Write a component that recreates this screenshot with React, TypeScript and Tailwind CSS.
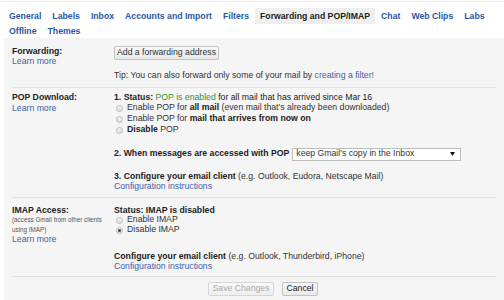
import type React from 'react';

const tabsRow1 = ['General', 'Labels', 'Inbox', 'Accounts and Import', 'Filters', 'Forwarding and POP/IMAP', 'Chat', 'Web Clips', 'Labs'];
const tabsRow2 = ['Offline', 'Themes'];
const ACTIVE = 'Forwarding and POP/IMAP';

const Tab: React.FC<{ label: string }> = ({ label }) => (
  <span
    className={`px-[5px] ${label === ACTIVE ? 'bg-[#efefef] text-[#222]' : 'text-[#2b56a6]'}`}
  >
    {label}
  </span>
);

const Radio: React.FC<{ checked?: boolean }> = ({ checked }) => (
  <span className="ml-[1.5px] mr-[4.5px] inline-flex h-[7px] w-[7px] shrink-0 items-center justify-center rounded-full border border-[#bbbbbb] bg-linear-to-b from-[#f4f4f4] to-[#dedede]">
    {checked && <span className="h-[3px] w-[3px] rounded-full bg-[#444]" />}
  </span>
);

const Link: React.FC<{ children: React.ReactNode }> = ({ children }) => (
  <span className="text-[#3b62ad]">{children}</span>
);

export default function App() {
  return (
    <div className="h-[300px] w-[504px] overflow-hidden bg-white font-['Liberation_Sans',Arial,sans-serif] text-[8.7px] text-[#222]">
      <div className="mt-px h-px bg-[#ececec]" />

      {/* tabs */}
      <div className="pl-[4px] pt-[6px] font-bold">
        <div className="flex h-[16px] items-center gap-x-px leading-[16px]">
          {tabsRow1.map((t) => (
            <Tab key={t} label={t} />
          ))}
        </div>
        <div className="flex h-[14px] items-center gap-x-px leading-[14px]">
          {tabsRow2.map((t) => (
            <Tab key={t} label={t} />
          ))}
        </div>
      </div>

      {/* settings panel */}
      <div className="ml-[4px] h-[262px] bg-[#f5f5f5] pl-[8px] pr-[8px]">
        {/* Forwarding */}
        <div className="flex border-b border-[#e2e2e2] pb-[7px] pt-[8px]">
          <div className="w-[102px] shrink-0 leading-[10px]">
            <div className="font-bold">Forwarding:</div>
            <Link>Learn more</Link>
          </div>
          <div className="flex-1">
            <div className="flex h-[14px] w-[105px] items-center justify-center rounded-[2px] border border-[#c3c3c3] bg-linear-to-b from-[#f9f9f9] to-[#e8e8e8] text-[#333]">
              Add a forwarding address
            </div>
            <div className="mt-[10px] leading-[10px] text-[#333]">
              Tip: You can also forward only some of your mail by <Link>creating a filter!</Link>
            </div>
          </div>
        </div>

        {/* POP */}
        <div className="flex border-b border-[#e2e2e2] pb-[6px] pt-[3.5px]">
          <div className="w-[102px] shrink-0 leading-[11px]">
            <div className="font-bold">POP Download:</div>
            <Link>Learn more</Link>
          </div>
          <div className="flex-1">
            <div className="leading-[11px]">
              <span className="font-bold">1. Status: </span>
              <span className="text-[#2f962f]">POP is enabled</span> for all mail that has arrived since Mar 16
            </div>
            <div className="flex h-[11px] items-center text-[#333]">
              <Radio />
              <span>
                Enable POP for <b className="text-[#222]">all mail</b> (even mail that's already been downloaded)
              </span>
            </div>
            <div className="flex h-[11px] items-center text-[#333]">
              <Radio />
              <span>
                Enable POP for <b className="text-[#222]">mail that arrives from now on</b>
              </span>
            </div>
            <div className="flex h-[11px] items-center text-[#333]">
              <Radio />
              <span>
                <b className="text-[#222]">Disable</b> POP
              </span>
            </div>

            <div className="mt-[12px] flex h-[13px] items-center">
              <span className="font-bold">2. When messages are accessed with POP</span>
              <div className="ml-[3px] flex h-[13px] w-[169px] items-center justify-between border border-[#bdbdbd] bg-white pl-[3px] pr-[5px] text-[#333]">
                <span>keep Gmail's copy in the Inbox</span>
                <svg width="5" height="4" viewBox="0 0 5 4">
                  <path d="M0 0h5L2.5 4z" fill="#111" />
                </svg>
              </div>
            </div>

            <div className="mt-[10.5px] leading-[10px]">
              <b>3. Configure your email client</b> <span className="text-[#333]">(e.g. Outlook, Eudora, Netscape Mail)</span>
            </div>
            <div className="leading-[10px]">
              <Link>Configuration instructions</Link>
            </div>
          </div>
        </div>

        {/* IMAP */}
        <div className="flex border-b border-[#e2e2e2] pb-[5px] pt-[7px]">
          <div className="w-[102px] shrink-0">
            <div className="font-bold leading-[10px]">IMAP Access:</div>
            <div className="text-[6.3px] leading-[9.5px] text-[#555]">
              (access Gmail from other clients
              <br />
              using IMAP)
            </div>
            <div className="leading-[10px]">
              <Link>Learn more</Link>
            </div>
          </div>
          <div className="flex-1">
            <div className="font-bold leading-[10px]">Status: IMAP is disabled</div>
            <div className="flex h-[10px] items-center text-[#333]">
              <Radio />
              <span>Enable IMAP</span>
            </div>
            <div className="flex h-[10px] items-center text-[#333]">
              <Radio checked />
              <span>Disable IMAP</span>
            </div>

            <div className="mt-[16px] leading-[10px]">
              <b>Configure your email client</b> <span className="text-[#333]">(e.g. Outlook, Thunderbird, iPhone)</span>
            </div>
            <div className="leading-[10px]">
              <Link>Configuration instructions</Link>
            </div>
          </div>
        </div>

        {/* actions */}
        <div className="flex gap-[8px] pl-[196px] pt-[4.7px]">
          <div className="flex h-[14px] w-[66px] items-center justify-center rounded-[2px] border border-[#d6d6d6] bg-linear-to-b from-[#f9f9f9] to-[#eeeeee] text-[#aaa]">
            Save Changes
          </div>
          <div className="flex h-[14px] w-[36px] items-center justify-center rounded-[2px] border border-[#c3c3c3] bg-linear-to-b from-[#f9f9f9] to-[#e8e8e8] text-[#222]">
            Cancel
          </div>
        </div>
      </div>
    </div>
  );
}
